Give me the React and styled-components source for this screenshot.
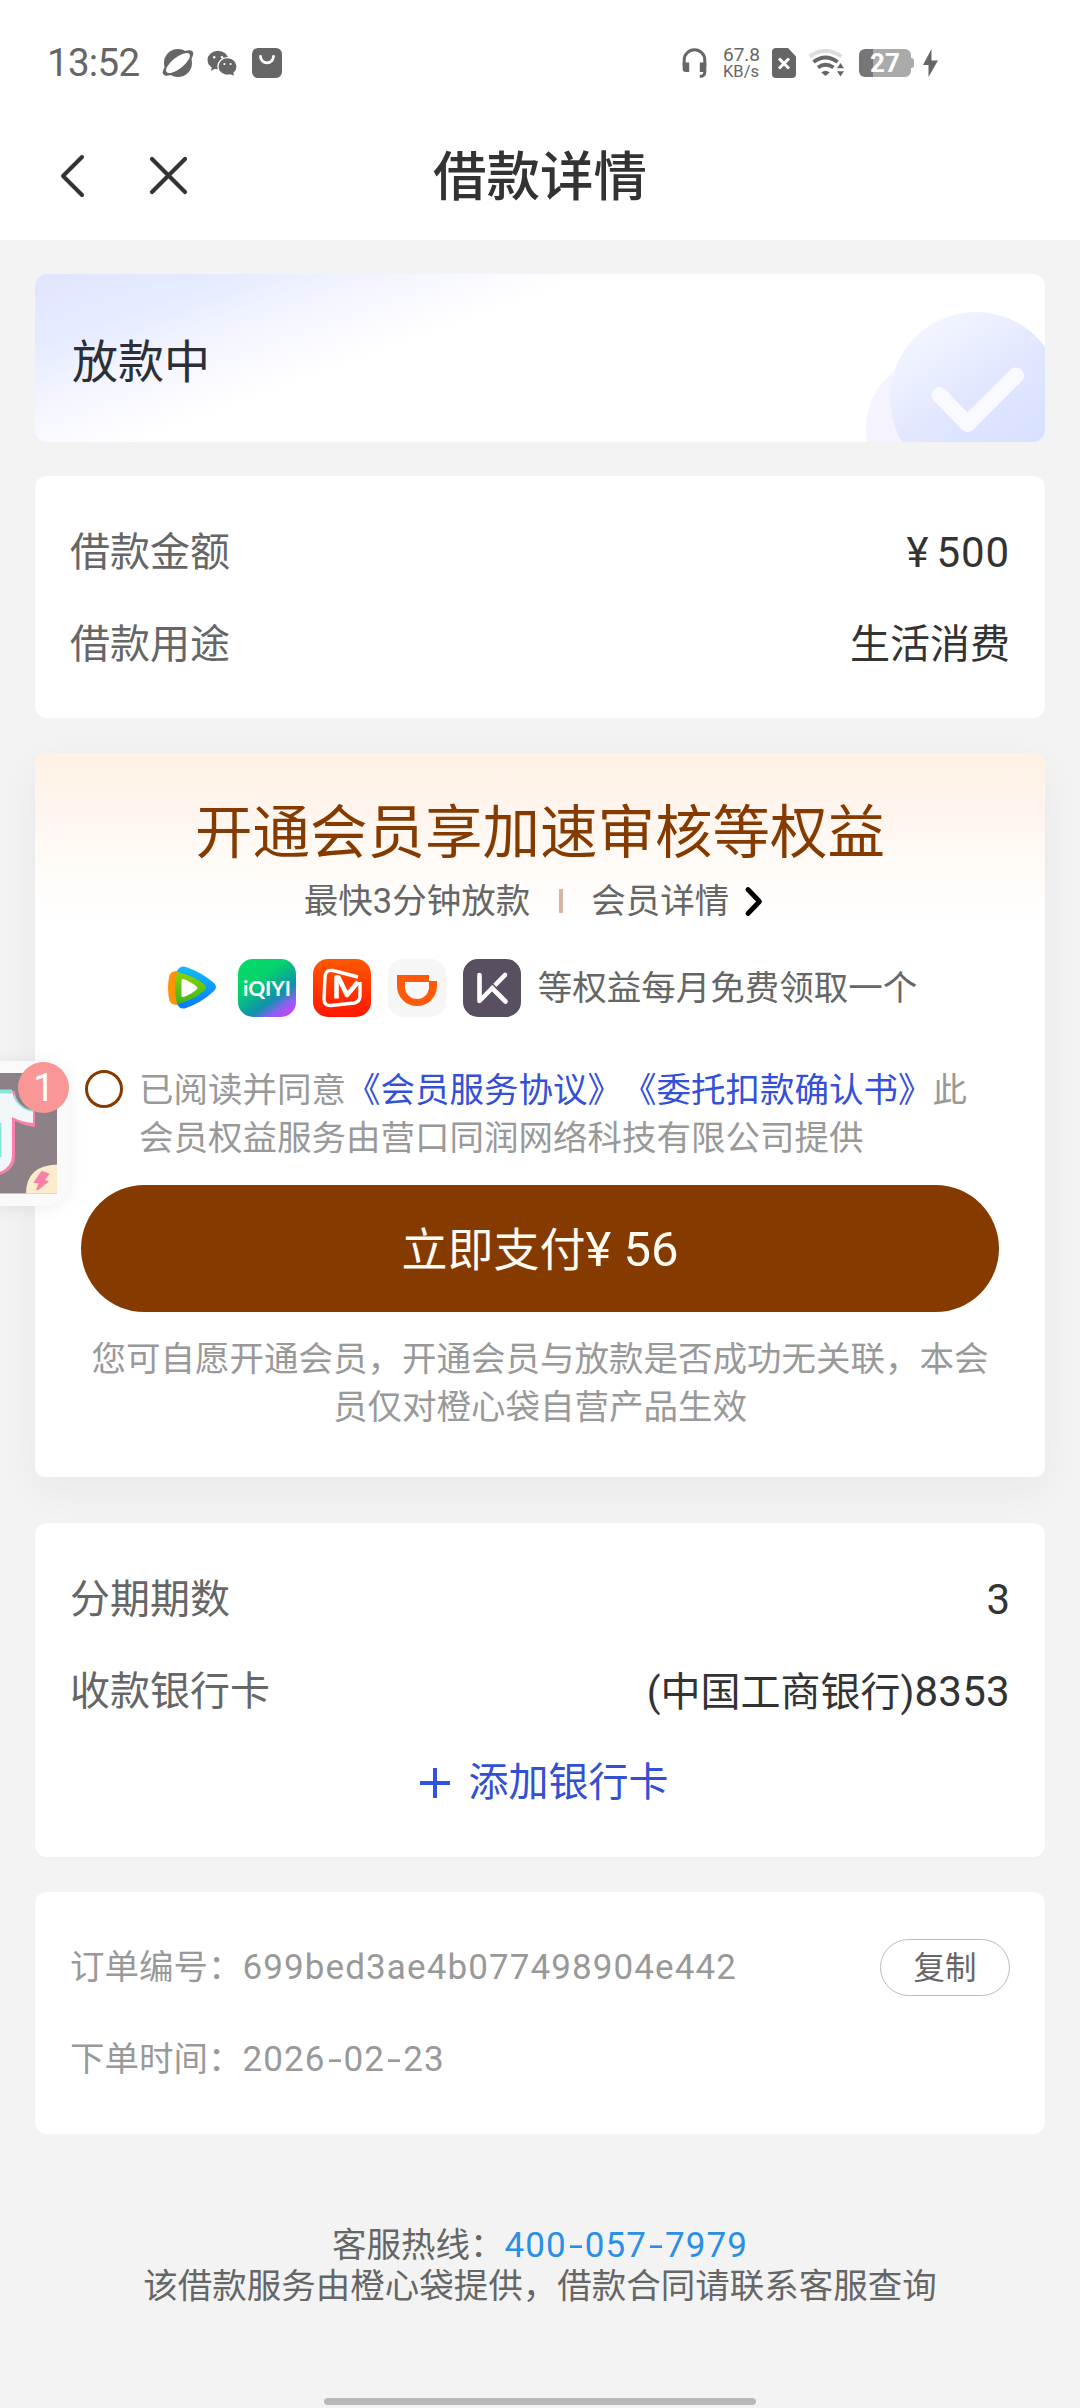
// App.jsx

import React from 'react';
import styled, { createGlobalStyle } from 'styled-components';

const GlobalStyle = createGlobalStyle`
  * {
    box-sizing: border-box;
  }

  body {
    margin: 0;
    background: #f3f3f3;
    font-family: Roboto, 'Noto Sans CJK SC', sans-serif;
    color: #333;
    text-spacing-trim: space-all;
  }
`;

const Page = styled.div`
  position: relative;
  width: 1080px;
  height: 2408px;
  overflow: hidden;
  display: flex;
  flex-direction: column;
  background: #f3f3f3;
`;

const Top = styled.header`
  height: 240px;
  background: #fff;
`;

const StatusBar = styled.div`
  height: 126px;
  padding: 0 142px 0 47px;
  display: flex;
  align-items: center;
  justify-content: space-between;
  color: #666;
`;

const StatusGroup = styled.div`
  display: flex;
  align-items: center;
`;

const Clock = styled.span`
  width: 115px;
  font-size: 38.5px;
  line-height: 40px;
  letter-spacing: -0.7px;
`;

const StatusIcon = styled.svg`
  display: block;
  margin-right: ${(props) => props.$gap || 0}px;
`;

const NetSpeed = styled.div`
  width: 36px;
  margin-right: 13px;
  font-size: 16.5px;
  line-height: 17px;
  text-align: center;
  white-space: nowrap;
`;

const SpeedValue = styled.div`
  font-size: 19px;
`;

const Nav = styled.nav`
  height: 100px;
  padding: 0 54px;
  display: grid;
  grid-template-columns: 1fr auto 1fr;
  align-items: center;
`;

const NavIcons = styled.div`
  display: flex;
  gap: 59px;
`;

const Title = styled.h1`
  margin: 0;
  padding-top: 4px;
  font-size: 53.5px;
  font-weight: 500;
  line-height: 60px;
  color: #333;
`;

const Content = styled.main`
  padding: 34px 35px 0;
  display: flex;
  flex-direction: column;
`;

const Card = styled.section`
  height: ${(props) => props.$height}px;
  margin-bottom: ${(props) => props.$gap || 35}px;
  padding: ${(props) => props.$top || 0}px 35px 0;
  border-radius: 12px;
  background: #fff;
`;

const StatusCard = styled(Card)`
  position: relative;
  overflow: hidden;
  display: flex;
  align-items: center;
  padding: 8px 37px 0;
  background: linear-gradient(160deg, #e0e5ff 0%, #e6ecff 14%, #f4f5ff 25%, #fff 38%);
`;

const StatusText = styled.span`
  font-size: 46px;
  line-height: 60px;
  color: #2d2f36;
`;

const Watermark = styled.svg`
  position: absolute;
  right: 0;
  bottom: 0;
`;

const Row = styled.div`
  height: 92px;
  display: flex;
  align-items: center;
  justify-content: space-between;
  font-size: 40px;
  line-height: 60px;
`;

const Label = styled.span`
  color: #666;
`;

const Value = styled.span`
  color: #333;
`;

const Digits = styled.span`
  font-size: ${(props) => props.$size || 42}px;
  letter-spacing: ${(props) => props.$spacing || 0}px;
`;

const Yen = styled.span`
  margin-right: 7px;
`;

// Roboto's hyphen is short, so it is widened here
const Dash = styled.span`
  display: inline-block;
  width: 18px;
  text-align: center;
  letter-spacing: 0;
  transform: scaleX(1.45);
`;

const AddCard = styled.div`
  height: 90px;
  display: flex;
  align-items: center;
  justify-content: center;
  gap: 18px;
  padding-left: 7px;
  font-size: 40px;
  line-height: 60px;
  color: #3450d2;
`;

const MemberCard = styled(Card)`
  padding: 43px 0 0;
  display: flex;
  flex-direction: column;
  align-items: center;
  border-radius: 9px;
  background: linear-gradient(180deg, #fff1e4 0%, #fff5ee 28%, #fffaf6 50%, #fff 80%) top / 100% 210px no-repeat #fff;
  box-shadow: 0 12px 42px rgba(30, 30, 60, 0.05);
`;

const MemberTitle = styled.h2`
  margin: 0;
  font-size: 57.5px;
  font-weight: 400;
  line-height: 76px;
  color: #853b00;
`;

const MemberSub = styled.div`
  height: 58px;
  display: flex;
  align-items: center;
  font-size: 34.5px;
  line-height: 48px;
  color: #666;
`;

const Divider = styled.i`
  width: 4px;
  height: 24px;
  margin: 0 28px 0 29px;
  background: #d6b5a2;
`;

const Benefits = styled.div`
  height: 58px;
  margin-top: 29px;
  display: flex;
  align-items: center;
  gap: 17px;
  font-size: 34.5px;
  line-height: 48px;
  color: #666;
`;

const Agreement = styled.div`
  width: 910px;
  margin-top: 49px;
  display: flex;
  gap: 16px;
  font-size: 34.5px;
  line-height: 48px;
  color: #999;
`;

const Radio = styled.span`
  flex: none;
  width: 38px;
  height: 38px;
  margin-top: 4px;
  border: 3px solid #853b00;
  border-radius: 50%;
`;

const AgreementText = styled.p`
  margin: 0;
  white-space: nowrap;
`;

const Link = styled.span`
  color: #3450d8;
`;

const PayButton = styled.button`
  width: 918px;
  height: 127px;
  margin: 23px 0 23px;
  padding: 0 0 6px;
  border: 0;
  border-radius: 64px;
  background: #853b00;
  font-family: inherit;
  font-size: 46px;
  color: #fffaf2;
`;

const Notice = styled.p`
  margin: 0;
  font-size: 34.5px;
  line-height: 48px;
  text-align: center;
  white-space: nowrap;
  color: #999;
`;

const OrderRow = styled(Row)`
  font-size: 34.5px;
  color: #999;
`;

const CopyButton = styled.button`
  width: 130px;
  height: 57px;
  padding: 0 0 4px;
  border: 1.5px solid #bdbdbd;
  border-radius: 29px;
  background: #fff;
  font-family: inherit;
  font-size: 31.5px;
  color: #666;
`;

const Footer = styled.footer`
  margin-top: 56px;
  font-size: 34.5px;
  line-height: 40px;
  text-align: center;
  color: #666;
`;

const Phone = styled.span`
  color: #2a8fe6;
`;

const HomeBar = styled.div`
  position: absolute;
  left: 324px;
  bottom: 3px;
  width: 432px;
  height: 7px;
  border-radius: 4px;
  background: #b9b9b9;
`;

const FloatingApp = styled.svg`
  position: absolute;
  left: 0;
  top: 1041px;
`;

function StatusLeft() {
  return (
    <StatusGroup>
      <Clock>13:52</Clock>
      <StatusIcon width="32" height="30" viewBox="0 0 32 30" $gap={13}>
        <circle cx="16" cy="15" r="14" fill="#666" />
        <g transform="rotate(-38 16 15)">
          <ellipse cx="16" cy="15" rx="18.5" ry="7" fill="#666" />
          <ellipse cx="16" cy="15" rx="14.5" ry="5.6" fill="#fff" />
        </g>
      </StatusIcon>
      <StatusIcon width="30" height="26" viewBox="0 0 30 26" $gap={15}>
        <ellipse cx="11" cy="10" rx="10.5" ry="9.3" fill="#666" />
        <path d="M5 16l-1 5 5-3z" fill="#666" />
        <ellipse cx="20.5" cy="16.5" rx="9.6" ry="8.8" fill="#666" stroke="#fff" strokeWidth="1.3" />
        <path d="M22 24l5 1.5-1-4z" fill="#666" />
        <circle cx="7.2" cy="7.2" r="1.2" fill="#fff" />
        <circle cx="15" cy="7.2" r="1.2" fill="#fff" />
        <circle cx="17.4" cy="14" r="1.1" fill="#fff" />
        <circle cx="23.6" cy="14" r="1.1" fill="#fff" />
      </StatusIcon>
      <StatusIcon width="30" height="30" viewBox="0 0 30 30">
        <rect width="30" height="30" rx="6" fill="#666" />
        <path d="M8.5 8.5a6.5 6.3 0 0 0 13 0" fill="none" stroke="#fff" strokeWidth="2.8" strokeLinecap="round" />
      </StatusIcon>
    </StatusGroup>
  );
}

function StatusRight() {
  return (
    <StatusGroup>
      <StatusIcon width="25" height="30" viewBox="0 0 25 30" $gap={16}>
        <path d="M2.2 18v-6a10.3 10.3 0 0 1 20.6 0v6" fill="none" stroke="#666" strokeWidth="3" />
        <path d="M.7 14.5h6.5V24H4a3.3 3.3 0 0 1-3.3-3.3zM17.8 14.5h6.5V24h-6.5z" fill="#666" />
        <path d="M22.8 24q0 4.3-5 4.5" fill="none" stroke="#666" strokeWidth="3" />
      </StatusIcon>
      <NetSpeed>
        <SpeedValue>67.8</SpeedValue>
        KB/s
      </NetSpeed>
      <StatusIcon width="24" height="30" viewBox="0 0 24 30" $gap={12}>
        <path d="M4 0h12l8 8.5V26a4 4 0 0 1-4 4H4a4 4 0 0 1-4-4V4a4 4 0 0 1 4-4z" fill="#666" />
        <path d="M7 10.5l10 10m0-10l-10 10" stroke="#fff" strokeWidth="3" />
      </StatusIcon>
      <StatusIcon width="37" height="28" viewBox="0 0 37 28" $gap={14}>
        <path d="M1.5 7.5q16-11 32 0" fill="none" stroke="#ddd" strokeWidth="4" />
        <path d="M5.5 13q12-9 24 0" fill="none" stroke="#666" strokeWidth="4" />
        <path d="M10 18.5q7.5-5.5 15.5 0" fill="none" stroke="#666" strokeWidth="3.8" />
        <path d="M17.5 27l-4.200-3.500q4.200-3.400 8.400 0z" fill="#666" />
        <path d="M32.5 14l3.500 5.200h-7zM32.500 27.500l3.500-5.200h-7z" fill="#666" />
      </StatusIcon>
      <StatusIcon width="55" height="28" viewBox="0 0 55 28" $gap={9}>
        <path d="M6 0h8v28H6a6 6 0 0 1-6-6V6a6 6 0 0 1 6-6z" fill="#767676" />
        <path d="M14 0h32a6 6 0 0 1 6 6v3q3 0 3 2.500v5q0 2.500-3 2.500v3a6 6 0 0 1-6 6H14z" fill="#aaa" />
        <text x="26" y="23" textAnchor="middle" fontFamily="Roboto" fontWeight="700" fontSize="26" fill="#fff">27</text>
      </StatusIcon>
      <StatusIcon width="15" height="28" viewBox="0 0 15 28">
        <path d="M8.5 0L0 16h5.500v12L15 11.500H8.500z" fill="#666" />
      </StatusIcon>
    </StatusGroup>
  );
}

function CheckMark() {
  return (
    <Watermark width="180" height="140" viewBox="0 0 180 140">
      <defs>
        <linearGradient id="disc" x1="0.15" y1="0.1" x2="0.7" y2="0.9">
          <stop offset="0" stopColor="#f3f6ff" />
          <stop offset="0.5" stopColor="#e2e7ff" />
          <stop offset="1" stopColor="#d6e0ff" />
        </linearGradient>
      </defs>
      <circle cx="75" cy="127" r="74" fill="#f3f4ff" />
      <circle cx="111" cy="96" r="86" fill="url(#disc)" />
      <path d="M74.5 93l28 29 48.5-48.5" fill="none" stroke="#f8faff" strokeWidth="16" strokeLinecap="round" strokeLinejoin="round" />
    </Watermark>
  );
}

function TencentLogo() {
  return (
    <svg width="58" height="58" viewBox="0 0 58 58">
      <defs>
        <linearGradient id="tx" x1="0" y1="0" x2="0" y2="1">
          <stop offset="0" stopColor="#11bdf2" />
          <stop offset="1" stopColor="#0878ff" />
        </linearGradient>
        <linearGradient id="txGreen" x1="0" y1="0" x2="0" y2="1">
          <stop offset="0" stopColor="#8fd400" />
          <stop offset="1" stopColor="#38b71c" />
        </linearGradient>
      </defs>
      <path d="M14 12q3-6 9-4 15 5 28 16 4 4 0 8-13 12-28 17-6 2-9-4-3-16 0-33z" fill="url(#tx)" />
      <path d="M6.500 16q2-4 8-4 4 16 0 34-6 0-8-4-3-13 0-26z" fill="#ff9208" />
      <path d="M14 13q15 3 27 12 4 3 0 7-12 10-27 13-4-17 0-32z" fill="url(#txGreen)" />
      <path d="M18.500 21.500q0-2 2-1.500 8 3 13 7.500 2 1.500 0 3-5 4.500-13 7.500-2 .5-2-1.500z" fill="#fff" />
    </svg>
  );
}

function IqiyiLogo() {
  return (
    <svg width="58" height="58" viewBox="0 0 58 58">
      <defs>
        <linearGradient id="iq" x1="0.2" y1="0" x2="0.9" y2="1">
          <stop offset="0" stopColor="#05d96a" />
          <stop offset="0.3" stopColor="#05d36b" />
          <stop offset="0.66" stopColor="#1090ae" />
          <stop offset="0.82" stopColor="#8a62ee" />
          <stop offset="1" stopColor="#d43cff" />
        </linearGradient>
      </defs>
      <rect width="58" height="58" rx="15" fill="url(#iq)" />
      <text x="29" y="36.5" textAnchor="middle" fontFamily="Lato" fontWeight="700" fontSize="21" textLength="48" lengthAdjust="spacingAndGlyphs" fill="#fff">iQIYI</text>
    </svg>
  );
}

function MangoLogo() {
  return (
    <svg width="58" height="58" viewBox="0 0 58 58">
      <defs>
        <linearGradient id="mg" x1="0" y1="0" x2="0" y2="1">
          <stop offset="0" stopColor="#ff5800" />
          <stop offset="1" stopColor="#ff1600" />
        </linearGradient>
      </defs>
      <rect width="58" height="58" rx="15" fill="url(#mg)" />
      <path d="M45 18L20 11.500q-7.500-1-8 6L11 40q0 7 7 6.500l23-2.500q5.500-1 6-6.500V23" fill="none" stroke="#fff" strokeWidth="3.4" />
      <path d="M23.500 39.500V18.500h2L34 36l11-13" fill="none" stroke="#fff" strokeWidth="4.6" strokeLinejoin="round" />
    </svg>
  );
}

function DidiLogo() {
  return (
    <svg width="58" height="58" viewBox="0 0 58 58">
      <rect width="58" height="58" rx="15" fill="#f6f6f6" />
      <path d="M9 16h32v6h8v5a20 20 0 0 1-40 0z" fill="#ff5a0b" />
      <path d="M17 23h24v5a12 12 0 0 1-24 0z" fill="#f9f9f9" />
    </svg>
  );
}

function KeepLogo() {
  return (
    <svg width="58" height="58" viewBox="0 0 58 58">
      <rect width="58" height="58" rx="15" fill="#584f60" />
      <path d="M16.5 16v26L42 16M31 31l11.500 11.500" fill="none" stroke="#fff" strokeWidth="4.600" strokeLinecap="round" strokeLinejoin="round" />
      <path d="M29 24.500l6 6" stroke="#584f60" strokeWidth="1.500" />
    </svg>
  );
}

function FloatingIcon() {
  return (
    <FloatingApp width="92" height="190" viewBox="0 0 92 190">
      <defs>
        <filter id="soft" x="-40%" y="-20%" width="180%" height="140%">
          <feDropShadow dx="0" dy="2" stdDeviation="8" floodColor="#000" floodOpacity="0.07" />
        </filter>
      </defs>
      <rect x="-70" y="20" width="139" height="145" rx="26" fill="#fafafa" filter="url(#soft)" />
      <rect x="-20" y="32" width="77" height="120.500" fill="#8c8186" />
      <path d="M12 50h3q1 17 20 20v16q-10-1-20-6v36q0 12-15 18z" fill="#fb7fad" />
      <path d="M0 49h12q2 17 21 21v12q-12-1-21-6v38q0 12-12 17z" fill="#f1f7f8" />
      <path d="M0 48.500h12v4H0zM0 82h1.500v34H0z" fill="#85e5df" />
      <path d="M14 54q5 14 19 16" fill="none" stroke="#85e5df" strokeWidth="1.5" />
      <path d="M26 152.500q0-28 31-29v29z" fill="#fbeccb" />
      <path d="M42 131l-7 10 5 .8-3 7 10-8-3.500-1.500 4.500-6z" fill="#f97fa8" stroke="#f97fa8" strokeWidth="2" />
      <circle cx="43.500" cy="46.500" r="25.500" fill="#fa9696" />
      <text x="44" y="60" textAnchor="middle" fontFamily="Roboto" fontSize="38" fill="#fff">1</text>
    </FloatingApp>
  );
}

function Dashed({ text }) {
  return (
    <Digits $size={35} $spacing={1.1}>
      {text.split('-').map((part, i) => (
        <React.Fragment key={i}>
          {i > 0 && <Dash>-</Dash>}
          {part}
        </React.Fragment>
      ))}
    </Digits>
  );
}

function App() {
  return (
    <Page lang="zh-CN">
      <GlobalStyle />
      <Top>
        <StatusBar>
          <StatusLeft />
          <StatusRight />
        </StatusBar>
        <Nav>
          <NavIcons>
            <svg width="36" height="44" viewBox="0 0 36 44">
              <path d="M28 3L9 22l19 19" fill="none" stroke="#333" strokeWidth="4" strokeLinecap="round" strokeLinejoin="round" />
            </svg>
            <svg width="40" height="44" viewBox="0 0 40 44">
              <path d="M3 5l33 33m0-33l-33 33" stroke="#333" strokeWidth="4.2" strokeLinecap="round" />
            </svg>
          </NavIcons>
          <Title>借款详情</Title>
        </Nav>
      </Top>

      <Content>
        <StatusCard $height={168} $gap={34}>
          <StatusText>放款中</StatusText>
          <CheckMark />
        </StatusCard>

        <Card $height={242} $top={31}>
          <Row>
            <Label>借款金额</Label>
            <Digits $spacing={0.9}>
              <Yen>¥</Yen>500
            </Digits>
          </Row>
          <Row>
            <Label>借款用途</Label>
            <Value>生活消费</Value>
          </Row>
        </Card>

        <MemberCard $height={724} $gap={46}>
          <MemberTitle>开通会员享加速审核等权益</MemberTitle>
          <MemberSub>
            最快3分钟放款
            <Divider />
            会员详情
            <svg width="47" height="32" viewBox="0 0 47 32">
              <path d="M19 4.500l11.500 12L19 28.500" fill="none" stroke="#000" strokeWidth="4.8" strokeLinecap="round" strokeLinejoin="round" />
            </svg>
          </MemberSub>
          <Benefits>
            <TencentLogo />
            <IqiyiLogo />
            <MangoLogo />
            <DidiLogo />
            <KeepLogo />
            等权益每月免费领取一个
          </Benefits>
          <Agreement>
            <Radio />
            <AgreementText>
              已阅读并同意<Link>《会员服务协议》《委托扣款确认书》</Link>此
              <br />
              会员权益服务由营口同润网络科技有限公司提供
            </AgreementText>
          </Agreement>
          <PayButton>
            立即支付<Digits $size={49}>¥ 56</Digits>
          </PayButton>
          <Notice>
            您可自愿开通会员，开通会员与放款是否成功无关联，本会
            <br />
            员仅对橙心袋自营产品生效
          </Notice>
        </MemberCard>

        <Card $height={334} $top={31}>
          <Row>
            <Label>分期期数</Label>
            <Digits>3</Digits>
          </Row>
          <Row>
            <Label>收款银行卡</Label>
            <Value>
              (中国工商银行)<Digits $spacing={0.3}>8353</Digits>
            </Value>
          </Row>
          <AddCard>
            <svg width="32" height="32" viewBox="0 0 32 32">
              <path d="M16 1v30M1 16h30" stroke="#3452e0" strokeWidth="4" />
            </svg>
            添加银行卡
          </AddCard>
        </Card>

        <Card $height={242} $top={29}>
          <OrderRow>
            <span>
              订单编号：<Digits $size={35} $spacing={1.1}>699bed3ae4b077498904e442</Digits>
            </span>
            <CopyButton>复制</CopyButton>
          </OrderRow>
          <OrderRow>
            <span>
              下单时间：<Dashed text="2026-02-23" />
            </span>
          </OrderRow>
        </Card>

        <Footer>
          客服热线：
          <Phone>
            <Dashed text="400-057-7979" />
          </Phone>
          <br />
          该借款服务由橙心袋提供，借款合同请联系客服查询
        </Footer>
      </Content>

      <FloatingIcon />
      <HomeBar />
    </Page>
  );
}

export default App;
